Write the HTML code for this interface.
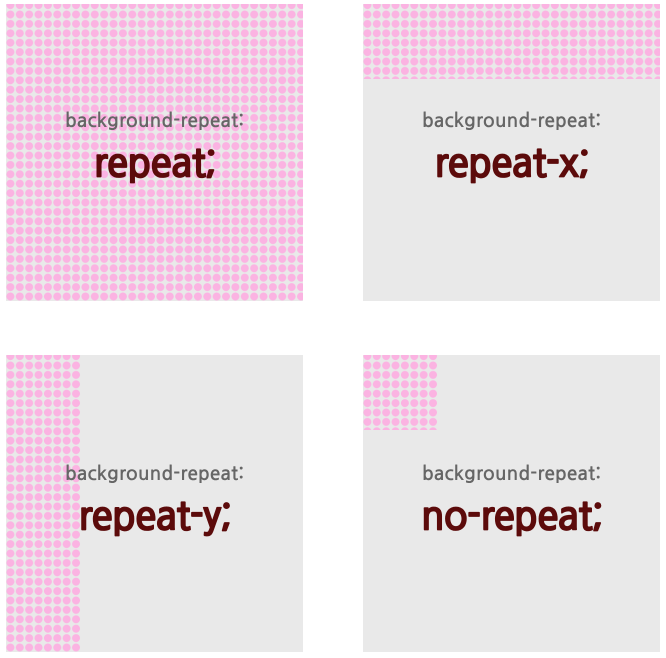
<!DOCTYPE html>
<html><head><meta charset="utf-8"><style>
html,body{margin:0;padding:0;background:#fff;width:666px;height:658px;overflow:hidden}
.p{position:absolute;width:297px;height:297px;background-color:#e9e9e9;font-family:"NanumGothic","Liberation Sans",sans-serif;text-align:center}
.a{position:absolute;left:0;right:0;font-size:19.5px;font-weight:bold;color:#666;letter-spacing:0px}
.b{position:absolute;left:0;right:0;font-size:40px;font-weight:bold;color:#5c0b0b;letter-spacing:-1.2px;-webkit-text-stroke:0.8px #5c0b0b}
svg{position:absolute;left:0;top:0}
</style></head><body>
<svg width="0" height="0" style="position:absolute"><defs>
<pattern id="d" width="9.375" height="9.4" patternUnits="userSpaceOnUse" x="0" y="-3.5">
<circle cx="4.4" cy="4.6" r="4" fill="#fbb3e2"/></pattern></defs></svg>

<div class="p" style="left:6px;top:4px">
<svg width="297" height="297"><rect width="297" height="297" fill="url(#d)"/></svg>
<div class="a" style="top:107px">background-repeat:</div>
<div class="b" style="top:139px">repeat;</div>
</div>

<div class="p" style="left:363px;top:4px">
<svg width="297" height="75"><rect width="297" height="75" fill="url(#d)"/></svg>
<div class="a" style="top:107px">background-repeat:</div>
<div class="b" style="top:139px">repeat-x;</div>
</div>

<div class="p" style="left:6px;top:355px">
<svg width="75" height="297"><rect width="75" height="297" fill="url(#d)"/></svg>
<div class="a" style="top:109px">background-repeat:</div>
<div class="b" style="top:141px">repeat-y;</div>
</div>

<div class="p" style="left:363px;top:355px">
<svg width="75" height="75"><rect width="75" height="75" fill="url(#d)"/></svg>
<div class="a" style="top:109px">background-repeat:</div>
<div class="b" style="top:141px">no-repeat;</div>
</div>
</body></html>
